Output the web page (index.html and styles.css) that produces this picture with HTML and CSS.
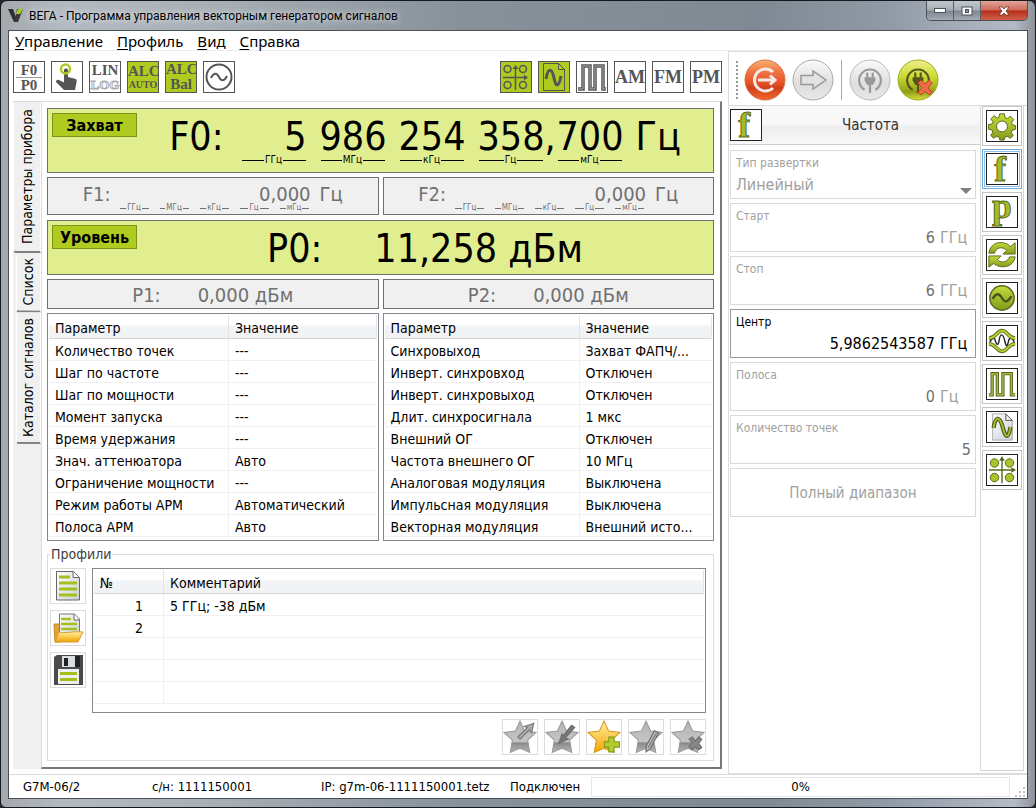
FILE: index.html
```html
<!DOCTYPE html>
<html lang="ru">
<head>
    <meta charset="UTF-8">
    <meta name="viewport" content="width=device-width, initial-scale=1.0">
    <title>ВЕГА - Программа управления векторным генератором сигналов</title>
    <link rel="stylesheet" href="styles.css">
</head>
<body>

    <!-- shared gradients and icons -->
    <svg class="defs" width="0" height="0" aria-hidden="true">
        <defs>
            <linearGradient id="green" x1="0" y1="0" x2="0" y2="1"><stop offset="0" stop-color="#c3dc3c"/><stop offset="1" stop-color="#849a1c"/></linearGradient>
            <linearGradient id="gold" x1="0" y1="0" x2="0" y2="1"><stop offset="0" stop-color="#fff3a0"/><stop offset="1" stop-color="#f3a200"/></linearGradient>
            <linearGradient id="silver" x1="0" y1="0" x2="0" y2="1"><stop offset="0" stop-color="#b5b5b5"/><stop offset=".65" stop-color="#c4c4c4"/><stop offset=".7" stop-color="#8a8a8a"/><stop offset="1" stop-color="#b8b8b8"/></linearGradient>
            <linearGradient id="paper" x1="0" y1="0" x2="1" y2="1"><stop offset="0" stop-color="#ffffff"/><stop offset="1" stop-color="#c9ced6"/></linearGradient>
            <linearGradient id="red" x1="0" y1="0" x2="0" y2="1"><stop offset="0" stop-color="#f6b26c"/><stop offset=".3" stop-color="#ee7444"/><stop offset=".55" stop-color="#ea5529"/><stop offset=".7" stop-color="#cf401a"/><stop offset="1" stop-color="#f0692c"/></linearGradient>
            <linearGradient id="round" x1="0" y1="0" x2="0" y2="1"><stop offset="0" stop-color="#fafafa"/><stop offset=".6" stop-color="#dedede"/><stop offset="1" stop-color="#e8e8e8"/></linearGradient>
            <linearGradient id="lime" x1="0" y1="0" x2="0" y2="1"><stop offset="0" stop-color="#f0ee8a"/><stop offset=".4" stop-color="#cddc35"/><stop offset=".65" stop-color="#a9b820"/><stop offset=".8" stop-color="#8f9d1c"/><stop offset="1" stop-color="#dde03a"/></linearGradient>
            <symbol id="star" viewBox="0 0 32 32"><path d="M16 1l4.3 9.4L31 11.700l-7.800 7.300 2 11.500L16 26.600 6.800 30.500l2-11.500L1 11.700l10.700-1.300z"/></symbol>
            <symbol id="plug" viewBox="0 0 24 24">
                <path d="M7 21a10 10 0 1 1 10 0" fill="none" stroke="currentColor" stroke-width="2"/>
                <path d="M9.500 5v5M14.500 5v5" stroke="currentColor" stroke-width="2"/>
                <path d="M7 9.500h10v3l-2.500 4H13V24h-2v-7.500H9.500L7 12.500z" fill="currentColor"/>
            </symbol>
        </defs>
    </svg>

    <header class="titlebar">
        <svg class="app-logo" width="16" height="16" viewBox="0 0 16 16"><path d="M0 1h5l3 8 1 5H6z" fill="#2f2f2f"/><path d="M9 1h6l-5 13H7z" fill="#3a3a3a"/><path d="M10 1h5l-3 5H8z" fill="#a9c820"/></svg>
        <h1>ВЕГА - Программа управления векторным генератором сигналов</h1>
        <div class="window-buttons">
            <button class="win-min" aria-label="Свернуть"><svg width="12" height="6" viewBox="0 0 12 6"><rect x=".5" y=".5" width="11" height="4" fill="#fff" stroke="#4b5159"/></svg></button>
            <button class="win-max" aria-label="Развернуть"><svg width="12" height="10" viewBox="0 0 12 10"><rect x="1" y="1" width="10" height="8" fill="#fff" stroke="#4b5159"/><rect x="4.500" y="3.500" width="3" height="3" fill="#8a9097" stroke="#4b5159"/></svg></button>
            <button class="win-close" aria-label="Закрыть"><svg width="12" height="10" viewBox="0 0 12 10"><path d="M1 1h3l2 2 2-2h3L8 5l3 4H8L6 7 4 9H1l3-4z" fill="#fff" stroke="#5b2a25" stroke-width=".7"/></svg></button>
        </div>
    </header>

    <div class="client">
        <nav class="menu">
            <button><u>У</u>правление</button>
            <button><u>П</u>рофиль</button>
            <button><u>В</u>ид</button>
            <button><u>С</u>правка</button>
        </nav>

        <main class="work">
            <section class="left">
                <div class="toolbar">
                    <div class="tools">
                        <button class="tool fraction"><span>F0</span><span>P0</span></button>
                        <button class="tool" aria-label="Ручной запуск"><svg width="30" height="30" viewBox="0 0 30 30"><path d="M12 8c0-2 4-2 4 0v7l6 1.500c3 .5 3 2 2.500 4L23 28H12l-8-8c0-2 2-3 4-1.500l4 2z" fill="#555"/><circle cx="13.500" cy="7" r="4.500" fill="none" stroke="#b0c920" stroke-width="2.500"/></svg></button>
                        <button class="tool stacked"><span>LIN</span><span class="hollow">LOG</span></button>
                        <button class="tool stacked on"><span class="big">ALC</span><span class="small">AUTO</span></button>
                        <button class="tool stacked on"><span class="big">ALC</span><span class="big">Bal</span></button>
                        <button class="tool" aria-label="Генератор"><svg width="30" height="30" viewBox="0 0 30 30"><circle cx="15" cy="15" r="12.500" fill="none" stroke="#555" stroke-width="2"/><path d="M7 16c3-6 6-5 8-1s5 5 8-1" fill="none" stroke="#555" stroke-width="2"/></svg></button>
                    </div>
                    <div class="tools">
                        <button class="tool on" aria-label="Векторная модуляция"><svg width="30" height="30" viewBox="0 0 30 30"><g fill="none" stroke="#555" stroke-width="1.500"><circle cx="6.500" cy="7" r="3.500"/><circle cx="22" cy="7" r="3.500"/><circle cx="6.500" cy="23" r="3.500"/><circle cx="22" cy="23" r="3.500"/><path d="M14.500 28V6M2 15.500h22"/></g><path d="M14.500 3l3 4h-6zM27 15.500l-4-3v6z" fill="#555"/></svg></button>
                        <button class="tool on" aria-label="Сигнал"><svg width="30" height="30" viewBox="0 0 30 30"><path d="M4.500 1.500h15l6 6v21h-21zM19.500 1.500v6h6" fill="none" stroke="#555"/><path d="M7 17c2-12 6-11 8-1s5 9 7-2" fill="none" stroke="#555" stroke-width="3"/></svg></button>
                        <button class="tool" aria-label="Импульсная модуляция"><svg width="30" height="30" viewBox="0 0 30 30"><path d="M1 27h5V4h7v23h5V4h8v23h3" fill="none" stroke="#555" stroke-width="3.500"/><path d="M1 27h5V4h7v23h5V4h8v23h3" fill="none" stroke="#aaa" stroke-width="1"/></svg></button>
                        <button class="tool letters">AM</button>
                        <button class="tool letters">FM</button>
                        <button class="tool letters">PM</button>
                    </div>
                </div>

                <div class="tabbed">
                    <div class="tabs" role="tablist">
                        <button class="tab selected" role="tab" aria-selected="true">Параметры прибора</button>
                        <button class="tab" role="tab">Список</button>
                        <button class="tab" role="tab">Каталог сигналов</button>
                    </div>

                    <div class="page">
                        <div class="display main-freq">
                            <span class="badge">Захват</span>
                            <div class="reading">
                                <span class="name">F0:</span>
                                <span class="group">5<small>ГГц</small></span>
                                <span class="group">986<small>МГц</small></span>
                                <span class="group">254<small>кГц</small></span>
                                <span class="group">358<small>Гц</small></span>
                                <span class="comma">,</span>
                                <span class="group">700<small>мГц</small></span>
                                <span class="unit">Гц</span>
                            </div>
                        </div>
                        <div class="pair">
                            <div class="display sub sub-freq">
                                <span>F1:</span>
                                <div class="value">0,000<div class="scale"><small>ГГц</small><small>МГц</small><small>кГц</small><small>Гц</small><small>мГц</small></div></div>
                                <span>Гц</span>
                            </div>
                            <div class="display sub sub-freq">
                                <span>F2:</span>
                                <div class="value">0,000<div class="scale"><small>ГГц</small><small>МГц</small><small>кГц</small><small>Гц</small><small>мГц</small></div></div>
                                <span>Гц</span>
                            </div>
                        </div>
                        <div class="display main-level">
                            <span class="badge">Уровень</span>
                            <div class="reading level"><span>P0:</span><span>11,258 дБм</span></div>
                        </div>
                        <div class="pair">
                            <div class="display sub sub-level"><span>P1:</span><span>0,000 дБм</span></div>
                            <div class="display sub sub-level"><span>P2:</span><span>0,000 дБм</span></div>
                        </div>

                        <div class="pair">
                            <div class="list">
                                <table>
                                    <colgroup><col class="col-first"><col></colgroup>
                                    <thead><tr><th>Параметр</th><th>Значение</th></tr></thead>
                                    <tbody>
                                        <tr><td>Количество точек</td><td>---</td></tr>
                                        <tr><td>Шаг по частоте</td><td>---</td></tr>
                                        <tr><td>Шаг по мощности</td><td>---</td></tr>
                                        <tr><td>Момент запуска</td><td>---</td></tr>
                                        <tr><td>Время удержания</td><td>---</td></tr>
                                        <tr><td>Знач. аттенюатора</td><td>Авто</td></tr>
                                        <tr><td>Ограничение мощности</td><td>---</td></tr>
                                        <tr><td>Режим работы АРМ</td><td>Автоматический</td></tr>
                                        <tr><td>Полоса АРМ</td><td>Авто</td></tr>
                                    </tbody>
                                </table>
                            </div>
                            <div class="list">
                                <table>
                                    <colgroup><col class="col-second"><col></colgroup>
                                    <thead><tr><th>Параметр</th><th>Значение</th></tr></thead>
                                    <tbody>
                                        <tr><td>Синхровыход</td><td>Захват ФАПЧ/...</td></tr>
                                        <tr><td>Инверт. синхровход</td><td>Отключен</td></tr>
                                        <tr><td>Инверт. синхровыход</td><td>Отключен</td></tr>
                                        <tr><td>Длит. синхросигнала</td><td>1 мкс</td></tr>
                                        <tr><td>Внешний ОГ</td><td>Отключен</td></tr>
                                        <tr><td>Частота внешнего ОГ</td><td>10 МГц</td></tr>
                                        <tr><td>Аналоговая модуляция</td><td>Выключена</td></tr>
                                        <tr><td>Импульсная модуляция</td><td>Выключена</td></tr>
                                        <tr><td>Векторная модуляция</td><td>Внешний исто...</td></tr>
                                    </tbody>
                                </table>
                            </div>
                        </div>

                        <fieldset class="profiles">
                            <legend>Профили</legend>
                            <div class="profile-body">
                                <div class="file-buttons">
                                    <button class="flat" aria-label="Новый"><svg width="32" height="32" viewBox="0 0 32 32"><path d="M4.500 1.500h17l6 6V30h-23z" fill="url(#paper)" stroke="#666"/><path d="M21 1.500v6h6" fill="#fff" stroke="#666"/><path d="M7 7h11M7 13h18M7 19h18M7 25h18" stroke="#a5bf1d" stroke-width="3"/></svg></button>
                                    <button class="flat" aria-label="Открыть"><svg width="32" height="32" viewBox="0 0 32 32"><path d="M2 12h6v18H3z" fill="#e0a43a" stroke="#c58622"/><path d="M7.500 2h15l5 5v18h-20z" fill="url(#paper)" stroke="#777"/><path d="M22 2v6h5" fill="#fff" stroke="#666"/><path d="M9 7h10M9 12h16M9 17h16" stroke="#a5bf1d" stroke-width="2.500"/><path d="M7 20c7 2 10-1 24 0l-5 10H3z" fill="url(#gold)" stroke="#d49b3a"/></svg></button>
                                    <button class="flat" aria-label="Сохранить"><svg width="32" height="32" viewBox="0 0 32 32"><path d="M2 3l3-2h26v30H2z" fill="#4b4b4b"/><path d="M10 2h13v11H10z" fill="#d9dce0"/><path d="M12 4h4v8h-4zM23 2h5v11h-5z" fill="#222"/><path d="M6 15h21v15H6z" fill="#eceff2"/><path d="M8 19.500h17M8 25.500h17" stroke="#a5bf1d" stroke-width="3"/></svg></button>
                                </div>
                                <div class="list profile-list">
                                    <table>
                                        <colgroup><col class="col-number"><col></colgroup>
                                        <thead><tr><th>№</th><th>Комментарий</th></tr></thead>
                                        <tbody>
                                            <tr><td>1</td><td>5 ГГц; -38 дБм</td></tr>
                                            <tr><td>2</td><td></td></tr>
                                            <tr><td></td><td></td></tr>
                                            <tr><td></td><td></td></tr>
                                            <tr><td></td><td></td></tr>
                                        </tbody>
                                    </table>
                                </div>
                            </div>
                            <div class="star-buttons">
                                <button class="flat" aria-label="Загрузить профиль"><svg width="34" height="34" viewBox="0 0 32 32"><use href="#star" fill="url(#silver)" stroke="#999"/><path d="M14 16l9-9-3-1 9-3-2 9-2-3-9 9z" fill="#aaa" stroke="#777"/></svg></button>
                                <button class="flat" aria-label="Записать профиль"><svg width="34" height="34" viewBox="0 0 32 32"><use href="#star" fill="url(#silver)" stroke="#999"/><path d="M28 7l-9 10 3 1-9 4 3-9 1 2 8-10z" fill="#777" stroke="#6c6c6c"/></svg></button>
                                <button class="flat" aria-label="Добавить профиль"><svg width="34" height="34" viewBox="0 0 32 32"><use href="#star" fill="url(#gold)" stroke="#dc9523"/><path d="M20.500 16h5v4.500h5v5h-5V30h-5v-4.500h-4v-5h4z" fill="#b5cb2b" stroke="#7f9820"/></svg></button>
                                <button class="flat" aria-label="Изменить профиль"><svg width="34" height="34" viewBox="0 0 32 32"><use href="#star" fill="url(#silver)" stroke="#999"/><path d="M24 10l4 2-8 15-4 3v-5z" fill="#bbb" stroke="#666"/><path d="M26 12l-8 14" stroke="#777"/></svg></button>
                                <button class="flat" aria-label="Удалить профиль"><svg width="34" height="34" viewBox="0 0 32 32"><use href="#star" fill="url(#silver)" stroke="#999"/><path d="M17 18l3-2 3 4 3-4 3 2-3 4 3 4-3 2-3-3-3 3-3-3 3-4z" fill="#888" stroke="#6d6d6d"/></svg></button>
                            </div>
                        </fieldset>
                    </div>
                </div>
            </section>

            <aside class="right">
                <div class="actions">
                    <span class="grip"></span>
                    <button class="round" aria-label="Выход"><svg width="42" height="44" viewBox="0 0 42 44"><circle cx="21" cy="22" r="20" fill="url(#red)" stroke="#d8704e"/><path d="M29 14a11 11 0 1 0 0 16" fill="none" stroke="#f4e9e4" stroke-width="3"/><path d="M14 22h17M26 17.500l5 4.500-5 4.500" fill="none" stroke="#f4e9e4" stroke-width="3"/></svg></button>
                    <button class="round" aria-label="Запуск"><svg width="42" height="44" viewBox="0 0 42 44"><circle cx="21" cy="22" r="20" fill="url(#round)" stroke="#aaa"/><path d="M9 17.500h12V13l13 9-13 9v-4.500H9z" fill="#e3e3e3" stroke="#999" stroke-width="1.500"/></svg></button>
                    <span class="divider"></span>
                    <button class="round" aria-label="Подключить"><svg width="42" height="44" viewBox="0 0 42 44"><circle cx="21" cy="22" r="20" fill="url(#round)" stroke="#bbb"/><g color="#999"><use href="#plug" x="8" y="9" width="26" height="26"/></g></svg></button>
                    <button class="round" aria-label="Отключить"><svg width="42" height="44" viewBox="0 0 42 44"><circle cx="21" cy="22" r="20" fill="url(#lime)" stroke="#9fae25"/><g color="#55561c"><use href="#plug" x="8" y="9" width="26" height="26"/></g><path d="M21 25l3-3 4 4 4-4 3 3-4 5 4 4-3 3-4-4-4 4-3-3 4-4z" fill="#ef6a4b" stroke="#c83e24"/></svg></button>
                </div>
                <div class="right-body">
                    <form class="settings">
                        <div class="settings-title">
                            <svg class="framed" width="32" height="32" viewBox="0 0 32 32"><text x="14" y="29" class="glyph">f</text></svg>
                            <h2>Частота</h2>
                        </div>
                        <div class="fields">
                            <div class="field">
                                <label for="sweep">Тип развертки</label>
                                <select id="sweep" disabled><option>Линейный</option></select>
                            </div>
                            <div class="field">
                                <label for="start">Старт</label>
                                <div class="entry"><input id="start" value="6" disabled><span>ГГц</span></div>
                            </div>
                            <div class="field">
                                <label for="stop">Стоп</label>
                                <div class="entry"><input id="stop" value="6" disabled><span>ГГц</span></div>
                            </div>
                            <div class="field enabled">
                                <label for="center">Центр</label>
                                <div class="entry"><input id="center" value="5,9862543587"><span>ГГц</span></div>
                            </div>
                            <div class="field">
                                <label for="band">Полоса</label>
                                <div class="entry"><input id="band" value="0" disabled><span>Гц</span></div>
                            </div>
                            <div class="field">
                                <label for="points">Количество точек</label>
                                <div class="entry bare"><input id="points" value="5" disabled></div>
                            </div>
                            <button type="button" class="full-range" disabled>Полный диапазон</button>
                        </div>
                    </form>
                    <nav class="sections">
                        <button aria-label="Настройки"><svg class="framed" width="32" height="32" viewBox="0 0 32 32"><path d="M13.500 3h5l.8 4 2.500 1L25 5.500l3.500 3.500-2.300 3.400 1 2.400 3.300.7v4l-3.500 1-1 2.500 2 3.200-3.200 2.800-3.300-2-2.400 1-.8 3h-4.600l-.9-3-2.400-1-3.400 2L4 26l2.200-3.400-1-2.400-3.700-.7v-5l3.900-.7 1-2.400L4 8.500 7.400 5l3.400 2.500 2-.9z" fill="url(#green)" stroke="#55681c"/><circle cx="16" cy="16.500" r="5.800" fill="#fff" stroke="#55681c"/></svg></button>
                        <button class="current" aria-label="Частота"><svg class="framed" width="32" height="32" viewBox="0 0 32 32"><text x="14" y="29" class="glyph">f</text></svg></button>
                        <button aria-label="Мощность"><svg class="framed" width="32" height="32" viewBox="0 0 32 32"><text x="16" y="22" class="glyph">p</text></svg></button>
                        <button aria-label="Развертка"><svg class="framed" width="32" height="32" viewBox="0 0 32 32"><g fill="url(#green)" stroke="#55681c"><path d="M2 14C4 1 18 0 25 7l5-4v12H17l4-4C17 7 10 7 8 14z"/><path d="M30 18c-2 12-16 13-23 7l-5 4V17h13l-4 4c4 4 11 3 13-3z"/></g></svg></button>
                        <button aria-label="Генератор"><svg class="framed" width="32" height="32" viewBox="0 0 32 32"><circle cx="16" cy="16" r="13" fill="url(#green)" stroke="#55681c" stroke-width="1.500"/><path d="M6 17c4-7 7-6 10-1s6 5 10-2" fill="none" stroke="#44551c" stroke-width="2.500"/></svg></button>
                        <button aria-label="Амплитудная модуляция"><svg class="framed" width="32" height="32" viewBox="0 0 32 32"><g fill="none"><path d="M3 17c3-5 5-5 6-1s3 6 4-1 4-8 6 1 3 4 4 0 4-4 6 1" stroke="#222" stroke-width="1.500"/><g stroke="#63771e" stroke-width="4"><path d="M2 13c8 0 8-8 14-8s6 8 14 8"/><path d="M2 19c8 0 8 8 14 8s6-8 14-8"/></g><g stroke="#b6d030" stroke-width="2"><path d="M2 13c8 0 8-8 14-8s6 8 14 8"/><path d="M2 19c8 0 8 8 14 8s6-8 14-8"/></g></g></svg></button>
                        <button aria-label="Импульсная модуляция"><svg class="framed" width="32" height="32" viewBox="0 0 32 32"><g fill="none"><path d="M2 27.500h3.500V5H11v22.500h6V5h9v22.500h4" stroke="#55681c" stroke-width="3.500"/><path d="M2 27.500h3.500V5H11v22.500h6V5h9v22.500h4" stroke="#a4b944" stroke-width="1.500"/></g></svg></button>
                        <button aria-label="Сигнал"><svg class="framed" width="32" height="32" viewBox="0 0 32 32"><path d="M6 2h14l7 7v21H6z" fill="url(#paper)" stroke="#aaa"/><path d="M20 2v7h7z" fill="#eee" stroke="#555"/><g fill="none"><path d="M7 17c2-14 7-12 10 0s6 11 8-1" stroke="#4c5d1b" stroke-width="4.500"/><path d="M7 17c2-14 7-12 10 0s6 11 8-1" stroke="#a8be2c" stroke-width="2"/></g></svg></button>
                        <button aria-label="Векторная модуляция"><svg class="framed" width="32" height="32" viewBox="0 0 32 32"><g fill="#a9c42b" stroke="#55681c"><circle cx="8" cy="8.500" r="4.500"/><circle cx="24" cy="8.500" r="4.500"/><circle cx="8" cy="24" r="4.500"/><circle cx="24" cy="24" r="4.500"/></g><path d="M16 30V5M2 16h26" stroke="#55681c" stroke-width="1.500"/><path d="M16 1l3 5h-6zM31 16l-5-3v6z" fill="#55681c"/></svg></button>
                    </nav>
                </div>
            </aside>
        </main>

        <footer class="status">
            <span class="model">G7M-06/2</span>
            <span class="serial">с/н: 1111150001</span>
            <span class="address">IP: g7m-06-1111150001.tetz</span>
            <span class="link-state">Подключен</span>
            <div class="progress" role="progressbar" aria-valuenow="0" aria-valuemin="0" aria-valuemax="100">0%</div>
            <svg class="size-grip" width="12" height="12" viewBox="0 0 12 12"><path d="M9 1h2v2H9zM5 5h2v2H5zM9 5h2v2H9zM1 9h2v2H1zM5 9h2v2H5zM9 9h2v2H9z" fill="#c4c4c4"/></svg>
        </footer>
    </div>

</body>
</html>
```
FILE: styles.css
```css
* {
    box-sizing: border-box;
}
html {
    background: #23282c;
}
body {
    margin: 0;
    height: 100vh;
    display: flex;
    flex-direction: column;
    padding: 0 7px 8px 7px;
    border: 1px solid #16191c;
    border-radius: 7px 7px 6px 6px;
    background: linear-gradient(90deg, #a3a8ad 0, #b3bac1 60px, #a9b1b8 200px, #87919a 460px, #7f8a94 760px, #8e99a5 880px, #b4bac6 98%, #8d9299 100%);
    font-family: "DejaVu Sans Condensed", "Noto Sans", sans-serif;
    font-size: 14px;
    color: #000;
}
button {
    font: inherit;
    color: inherit;
    padding: 0;
    margin: 0;
    border: none;
    background: none;
}
svg {
    display: block;
}
.defs {
    position: absolute;
}

/* title bar */
.titlebar {
    display: flex;
    align-items: center;
    height: 29px;
    flex: none;
}
.app-logo {
    margin-right: 5px;
}
.titlebar h1 {
    flex: 1;
    margin: 0;
    font: 12px Roboto, "Noto Sans", sans-serif;
    text-shadow: 0 0 6px #fff;
}
.window-buttons {
    align-self: flex-start;
    display: flex;
    height: 20px;
    border: 1px solid #4a5058;
    border-top: none;
    border-radius: 0 0 5px 5px;
    overflow: hidden;
}
.window-buttons button {
    display: flex;
    align-items: center;
    justify-content: center;
    width: 27px;
    background: linear-gradient(#c2c7cd 0, #a8aeb6 48%, #7f868f 52%, #a3aab3 100%);
    border-right: 1px solid #59606a;
}
.window-buttons .win-close {
    width: 46px;
    border-right: none;
    background: linear-gradient(#e0a598 0, #cf6d5b 46%, #b5301a 52%, #d0604a 100%);
}

/* client area */
.client {
    flex: 1;
    min-height: 0;
    display: flex;
    flex-direction: column;
    background: #fff;
    border: 1px solid #4a4f54;
}
.menu {
    display: flex;
    gap: 14px;
    height: 20px;
    flex: none;
    padding: 0 6px;
    border-bottom: 1px solid #ececec;
    font: 15px "Noto Sans", sans-serif;
}
.menu u {
    text-underline-offset: 2px;
}
.work {
    flex: 1;
    min-height: 0;
    display: flex;
}
.left {
    flex: 1;
    min-width: 0;
    display: flex;
    flex-direction: column;
    padding: 0 6px 5px 4px;
}
.toolbar {
    display: flex;
    justify-content: space-between;
    height: 50px;
    padding-top: 10px;
    flex: none;
}
.tools {
    display: flex;
    gap: 6px;
}
.tool {
    width: 32px;
    height: 32px;
    border: 1px solid #555;
    color: #555;
    background: #fff;
    font: bold 15px/15px "Liberation Serif", serif;
}
.tool.on {
    background: #b0cb1f;
}
.fraction span {
    display: block;
    line-height: 14px;
}
.fraction span:first-child {
    margin: 0 2px;
    border-bottom: 1px solid #999;
}
.stacked span {
    display: block;
}
.stacked .hollow {
    color: #fff;
    -webkit-text-stroke: 1px #aaa;
    line-height: 13px;
    font-size: 13px;
}
.stacked .big {
    font-size: 15px;
}
.stacked .small {
    font-size: 10px;
    line-height: 12px;
}
.letters {
    font-size: 18px;
}

/* vertical tabs */
.tabbed {
    flex: 1;
    min-height: 0;
    display: flex;
}
.tabs {
    display: flex;
    flex-direction: column;
    align-items: flex-end;
    width: 28px;
    background: #f0f0f0;
    border-top: 1px solid #dcdcdc;
}
.tab {
    writing-mode: vertical-rl;
    transform: rotate(180deg);
    width: 25px;
    padding: 5px 0 5px 2px;
    border-top: 2px solid #808080;
    border-left: 1px solid #fff;
    border-right: 1px solid #fff;
    border-radius: 0 3px 3px 0;
    line-height: 20px;
}
.tab.selected {
    width: 28px;
    padding: 7px 0;
}
.page {
    flex: 1;
    min-width: 0;
    display: flex;
    flex-direction: column;
    gap: 4px;
    padding: 6px 6px 6px 5px;
    border-style: solid;
    border-width: 1px 2px 2px 1px;
    border-color: #dcdcdc #777 #777 #dcdcdc;
}

/* readouts */
.display {
    display: flex;
    border: 1px solid #707070;
    background: #e1ee90;
}
.main-freq,
.main-level {
    font-size: 39px;
}
.main-freq {
    height: 65px;
}
.main-level {
    height: 55px;
    margin-top: 1px;
}
.badge {
    flex: none;
    width: 85px;
    height: 24px;
    margin: 4px 0 0 4px;
    border: 1px solid #7f9417;
    background: #b0cb1f;
    text-align: center;
    font-size: 16px;
    font-weight: bold;
    line-height: 24px;
}
.reading {
    flex: 1;
    display: flex;
    justify-content: center;
    line-height: 56px;
}
.name {
    margin-right: 17px;
}
.group {
    display: flex;
    flex-direction: column;
    width: 66px;
    height: 56px;
    margin-right: 13px;
    text-align: right;
    white-space: nowrap;
    line-height: 56px;
}
.group:has(+ .comma) {
    margin-right: 0;
}
.comma {
    width: 13px;
    text-align: center;
}
.group small,
.scale small {
    display: flex;
    align-items: center;
    gap: 1px;
    line-height: 10px;
}
.group small {
    margin: -10px 1px 0;
    font-size: 10px;
}
.group small::before,
.group small::after,
.scale small::before,
.scale small::after {
    content: "";
    flex: 1;
    height: 1px;
    background: currentColor;
}
.reading.level {
    gap: 52px;
}
.pair {
    display: grid;
    grid-template-columns: 1fr 1fr;
    gap: 4px;
}
.sub {
    justify-content: center;
    background: #f0f0f0;
    color: #707070;
    font-size: 20px;
}
.sub-freq {
    height: 38px;
    gap: 9px;
    line-height: 32px;
}
.sub-freq .value {
    width: 191px;
    text-align: right;
}
.scale {
    display: flex;
    gap: 11px;
    margin-top: -7px;
}
.scale small {
    width: 29px;
    font-size: 8px;
}
.sub-level {
    height: 30px;
    gap: 37px;
    line-height: 31px;
}

/* lists */
.list {
    min-width: 0;
    height: 228px;
    padding: 1px;
    border: 1px solid #828790;
    background: #fff;
    overflow: hidden;
}
.list table {
    width: 100%;
    table-layout: fixed;
    border-collapse: separate;
    border-spacing: 0;
}
.list th {
    height: 24px;
    padding: 2px 5px 0 6px;
    text-align: left;
    font-weight: normal;
    border-right: 1px solid #e3e5e8;
    border-bottom: 1px solid #d5d5d5;
    background: linear-gradient(#fff 45%, #f3f4f6 46%, #f1f2f4 100%);
}
.list td {
    height: 22px;
    padding: 2px 5px 0 6px;
    border-bottom: 1px solid #f0f0f0;
    white-space: nowrap;
}
.list td:first-child {
    border-right: 1px solid #f0f0f0;
}
.col-first {
    width: 180px;
}
.col-second {
    width: 195px;
}
.col-number {
    width: 70px;
}

/* profiles */
.profiles {
    flex: 1;
    min-width: 0;
    margin: 0;
    padding: 0 7px 0 2px;
    border: 1px solid #dcdcdc;
}
.profiles legend {
    padding: 0 1px;
    line-height: 18px;
    color: #3c3c3c;
}
.profile-body {
    display: flex;
    gap: 6px;
    padding-top: 5px;
}
.file-buttons {
    display: flex;
    flex-direction: column;
    gap: 6px;
}
.flat {
    display: flex;
    align-items: center;
    justify-content: center;
    width: 36px;
    height: 36px;
    border: 1px solid #dcdcdc;
}
.profile-list {
    flex: 1;
    height: 145px;
}
.profile-list td:first-child {
    text-align: right;
    padding-right: 20px;
}
.star-buttons {
    display: flex;
    justify-content: flex-end;
    gap: 6px;
    padding-top: 6px;
}

/* right panel */
.right {
    flex: none;
    width: 299px;
    display: flex;
    flex-direction: column;
    border: solid #dcdcdc;
    border-width: 1px 0 1px 1px;
}
.actions {
    display: flex;
    align-items: center;
    height: 54px;
    flex: none;
    padding: 3px 0 0 7px;
    gap: 6px;
    border-bottom: 1px solid #dcdcdc;
}
.grip {
    height: 38px;
    border-left: 2px dotted #999;
}
.divider {
    height: 40px;
    border-left: 1px solid #aaa;
    margin: 0 1px;
}
.right-body {
    flex: 1;
    min-height: 0;
    display: flex;
}
.settings {
    flex: 1;
    min-width: 0;
}
.settings-title {
    display: flex;
    align-items: center;
    height: 39px;
    padding: 0 1px;
    border-bottom: 1px solid #ccc;
    background: linear-gradient(#f8f8f8 45%, #ededed 55%, #f8f8f8 100%);
}
.settings-title h2 {
    flex: 1;
    margin: 0;
    text-align: center;
    font-size: 15px;
    font-weight: normal;
    color: #333;
}
.framed {
    border: 1px solid #222;
    background: #fff;
    overflow: visible;
}
.glyph {
    font: bold 38px "Liberation Serif", serif;
    text-anchor: middle;
    fill: #a4bb2c;
    stroke: #55681c;
    stroke-width: 1px;
}
.fields {
    display: flex;
    flex-direction: column;
    gap: 4px;
    padding: 5px 4px 0 1px;
}
.field,
.full-range {
    height: 49px;
    border: 1px solid #d9d9d9;
    color: #a0a0a0;
}
.field {
    padding: 4px 9px 0 5px;
}
.field label {
    display: block;
    font-size: 12px;
    line-height: 16px;
}
.field select {
    display: block;
    width: 100%;
    height: 26px;
    padding: 0;
    border: none;
    appearance: none;
    opacity: 1;
    font: inherit;
    font-size: 16px;
    color: #a0a0a0;
    background: none;
}
.field:has(select) {
    position: relative;
    padding-right: 3px;
}
.field:has(select)::after {
    content: "";
    position: absolute;
    right: 3px;
    bottom: 4px;
    border: 6px solid transparent;
    border-top-color: #808080;
    border-bottom: none;
}
.entry {
    display: flex;
    gap: 5px;
    font-size: 16px;
    line-height: 24px;
    padding-top: 2px;
}
.entry input {
    flex: 1;
    min-width: 0;
    padding: 0;
    border: none;
    background: none;
    font: inherit;
    text-align: right;
    color: #707070;
}
.entry span {
    width: 26px;
}
.entry.bare {
    margin-right: -5px;
}
.enabled {
    border-color: #999;
    color: #000;
}
.enabled input {
    color: #000;
}
.full-range {
    font-size: 15px;
}
.sections {
    flex: none;
    width: 44px;
    margin: 0 3px 2px 0;
    padding: 0 1px;
    display: flex;
    flex-direction: column;
    gap: 3px;
    border: 1px solid #d6d6d6;
    border-top: none;
}
.sections button {
    display: flex;
    align-items: center;
    justify-content: center;
    height: 40px;
    border: 1px solid #c4c4c4;
    background: #fff;
}
.sections .current {
    border-color: #6ea6dd;
    box-shadow: inset 0 0 0 1px #fff, inset 0 0 0 2px #8fbdea;
}

/* status bar */
.status {
    display: flex;
    align-items: center;
    flex: none;
    height: 24px;
    padding: 0 1px 0 14px;
    border-top: 1px solid #dcdcdc;
    font-size: 13px;
}
.model {
    width: 129px;
}
.serial {
    width: 169px;
}
.address {
    width: 189px;
}
.link-state {
    width: 81px;
}
.progress {
    flex: 1;
    height: 20px;
    border: 1px solid #e6e6e6;
    text-align: center;
    line-height: 18px;
}
.size-grip {
    margin-left: 4px;
    align-self: flex-end;
}
```
